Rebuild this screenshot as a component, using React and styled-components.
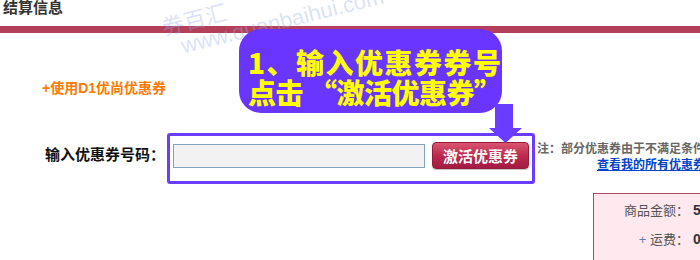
import styled, { createGlobalStyle } from "styled-components";

const Global = createGlobalStyle`
  html, body {
    margin: 0;
    padding: 0;
    background: #fff;
  }
  body {
    font-family: "Liberation Sans", "Noto Sans CJK SC", sans-serif;
  }
`;

export default function App() {
  return (
    <>
      <Global />
      <Page>
        <Title>结算信息</Title>
        <Bar />
        <Content>
          <Toggle>+使用D1优尚优惠券</Toggle>
          <CouponRow>
            <Label>输入优惠券号码：</Label>
            <Frame>
              <CodeInput type="text" />
              <ActivateButton>激活优惠券</ActivateButton>
            </Frame>
            <Notes>
              <div>注：部分优惠券由于不满足条件使用</div>
              <NoteLink href="#">查看我的所有优惠券</NoteLink>
            </Notes>
          </CouponRow>
          <Summary>
            <SumLabel>商品金额：</SumLabel>
            <SumValue>5</SumValue>
            <SumLabel><Plus>+</Plus> 运费：</SumLabel>
            <SumValue>0</SumValue>
            <SumLabel>优惠券：</SumLabel>
            <SumValue>0</SumValue>
          </Summary>
        </Content>

        <Watermark>
          <div>券百汇</div>
          <div className="url">www.quanbaihui.com</div>
        </Watermark>

        <Callout>
          <CalloutLine $spacing="1.5px">1、输入优惠券券号</CalloutLine>
          <CalloutLine $spacing="-0.5px">点击 “激活优惠券”</CalloutLine>
        </Callout>
        <Arrow viewBox="0 0 36 40" width="36" height="40">
          <rect x="7" y="0" width="18" height="25" fill="#6a3cff" />
          <polygon points="1,24 34,24 17.5,39" fill="#6a3cff" />
        </Arrow>
      </Page>
    </>
  );
}

const Page = styled.div`
  position: relative;
  width: 700px;
  height: 260px;
  overflow: hidden;
`;

const Title = styled.div`
  height: 26px;
  padding-left: 3px;
  font-size: 15px;
  line-height: 15px;
  font-weight: bold;
  color: #333;
`;

const Bar = styled.div`
  height: 7px;
  background: #b3405a;
`;

const Content = styled.div`
  padding-top: 47px;
`;

const Toggle = styled.div`
  padding-left: 42px;
  font-size: 14px;
  line-height: 16px;
  font-weight: bold;
  color: #ff7a00;
`;

const CouponRow = styled.div`
  display: flex;
  align-items: flex-start;
  margin-top: 37px;
  & > * {
    flex-shrink: 0;
  }
`;

const Label = styled.div`
  width: 122px;
  padding-left: 45px;
  margin-top: 13px;
  font-size: 15px;
  line-height: 18px;
  font-weight: bold;
  color: #111;
  white-space: nowrap;
`;

const Frame = styled.div`
  display: flex;
  align-items: flex-start;
  gap: 7px;
  width: 359px;
  height: 39px;
  padding: 6px 0 0 3px;
  border: 3px solid #6a3cff;
  border-radius: 3px;
`;

const CodeInput = styled.input`
  width: 252px;
  height: 24px;
  margin: 2px 0 0;
  padding: 0;
  box-sizing: border-box;
  border: 1px solid #7fa3bf;
  background: #f2f2f2;
  outline: none;
`;

const ActivateButton = styled.button`
  width: 97px;
  height: 27px;
  padding: 0;
  border: 1px solid #981a3b;
  border-radius: 4px;
  background: linear-gradient(#d9556f, #bd2a4f 50%, #a31b42);
  color: #fff;
  font-family: "Liberation Sans", "Noto Sans CJK SC", sans-serif;
  font-size: 15px;
  font-weight: bold;
  box-shadow: 0 1px 1px rgba(0, 0, 0, 0.25);
`;

const Notes = styled.div`
  margin: 8px 0 0 2px;
  width: 168px;
  text-align: right;
  white-space: nowrap;
  font-size: 12px;
  line-height: 16px;
  font-weight: bold;
  color: #666;
`;

const NoteLink = styled.a`
  color: #0044cc;
  text-decoration: underline;
`;

const Summary = styled.div`
  display: grid;
  grid-template-columns: 95px auto;
  width: 200px;
  margin: 9px 0 0 593px;
  padding-top: 2px;
  border: 1px solid #b04a63;
  background: #ffe9ef;
  font-size: 13px;
  line-height: 29px;
`;

const SumLabel = styled.div`
  text-align: right;
  color: #555;
  white-space: nowrap;
`;

const SumValue = styled.div`
  padding-left: 4px;
  font-size: 14px;
  font-weight: bold;
  color: #333;
`;

const Plus = styled.span`
  color: #5a7fb5;
`;

const Watermark = styled.div`
  position: absolute;
  left: 160px;
  top: 18px;
  transform: rotate(-14deg);
  transform-origin: left top;
  font-size: 22px;
  line-height: 22px;
  color: rgba(150, 172, 235, 0.35);
  pointer-events: none;
  .url {
    padding-left: 14px;
  }
`;

const Callout = styled.div`
  position: absolute;
  left: 239px;
  top: 29px;
  width: 263px;
  height: 84px;
  box-sizing: border-box;
  padding: 18px 0 0 9px;
  border-radius: 22px;
  background: #6a35ff;
  color: #ffff00;
  font-family: "Noto Sans CJK SC", sans-serif;
  font-size: 28px;
  line-height: 30px;
  font-weight: 900;
  white-space: nowrap;
`;

const CalloutLine = styled.div`
  letter-spacing: ${(p) => p.$spacing};
`;

const Arrow = styled.svg`
  position: absolute;
  left: 488px;
  top: 104px;
`;
